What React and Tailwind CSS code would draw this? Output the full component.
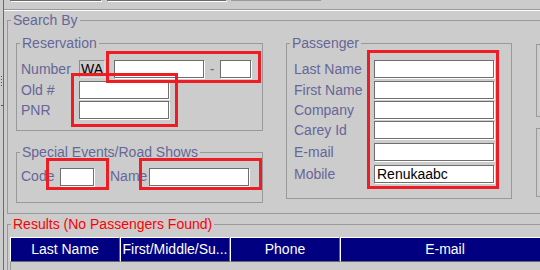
import React from 'react';

const label = 'text-[#666699]';
const field =
  'h-[18px] bg-white border border-[#6e6e6e] shadow-[1px_1px_0_#ffffff] px-[2px] text-[14px] text-black outline-none';

// titled border; padding goes on the inner div so the legend stays next to the corner
function Box({ title, className = '', inner = '', legendClass = label, children }) {
  return (
    <fieldset className={`border border-[#999999] ${className}`}>
      <legend className={`ml-[3px] px-[2px] leading-[16px] ${legendClass}`}>{title}</legend>
      <div className={inner}>{children}</div>
    </fieldset>
  );
}

function Row({ name, width, children, className = '' }) {
  return (
    <div className={`flex items-center ${className}`}>
      <span className={`${label} ${width} leading-[16px]`}>{name}</span>
      {children}
    </div>
  );
}

function Redbox({ className }) {
  return <div className={`absolute border-[3px] border-[#ee1c24] pointer-events-none ${className}`} />;
}

const passengerRows = [
  { name: 'Last Name', mt: '' },
  { name: 'First Name', mt: 'mt-[3px]' },
  { name: 'Company', mt: 'mt-[2px]' },
  { name: 'Carey Id', mt: 'mt-[2px]' },
  { name: 'E-mail', mt: 'mt-[4px]' },
  { name: 'Mobile', mt: 'mt-[4px]', value: 'Renukaabc' },
];

const columns = [
  { name: 'Last Name', w: 'w-[110px]' },
  { name: 'First/Middle/Su...', w: 'w-[110px]' },
  { name: 'Phone', w: 'w-[110px]' },
  { name: 'E-mail', w: 'w-[210px]' },
];

export default function App() {
  return (
    <div className="relative flex w-[540px] h-[270px] overflow-hidden bg-[#cccccc] font-['Liberation_Sans',Arial,sans-serif] text-[14px]">
      {/* splitter grip */}
      <div className="w-[3px] shrink-0 flex flex-col items-center pt-[76px] gap-[2px]">
        <div className="w-[1px] h-[1px] bg-[#555]" />
        <div className="w-[1px] h-[1px] bg-[#555]" />
        <div className="w-[1px] h-[1px] bg-[#555]" />
        <div className="w-[1px] h-[1px] bg-[#555]" />
        <div className="w-[2px] h-[1px] bg-[#555] mt-[17px]" />
      </div>
      <div className="w-px shrink-0 bg-[#6a6a6a]" />

      <div className="flex-1 flex flex-col min-w-0">
        {/* bottoms of the fields above */}
        <div className="h-[9px] flex items-start shrink-0">
          <div className="ml-[6px] w-[91px] h-[1px] bg-[#6a6a6a] shadow-[1px_1px_0_#ffffff]" />
          <div className="ml-[6px] w-[119px] h-[1px] bg-[#6a6a6a] shadow-[1px_1px_0_#ffffff]" />
          <div className="ml-[5px] w-[90px] h-[1px] bg-[#999999]" />
        </div>
        <div className="h-[2px] shrink-0 border-t border-[#999999] border-b border-b-white" />

        <Box title="Search By" className="mt-[1px] ml-[3px] w-[560px] shrink-0" inner="pt-[7px] pl-[8px] pb-[13px]">
          <div className="flex h-[165px]">
            {/* left column */}
            <div className="flex flex-col w-[247px]">
              <Box title="Reservation" inner="pt-[9px] pl-[4px] pb-[11px]">
                <Row name="Number" width="w-[58px]" className="h-[18px]">
                  <div className="w-[26px] h-[18px] border border-[#8c8c8c] border-r-[#dddddd] border-b-[#dddddd] text-black leading-[16px] pl-[1px]">
                    WA
                  </div>
                  <input readOnly className={`${field} ml-[9px] w-[90px]`} />
                  <span className="w-[16px] text-center text-[#666699]">-</span>
                  <input readOnly className={`${field} w-[31px]`} />
                </Row>
                <Row name="Old #" width="w-[58px]" className="mt-[3px]">
                  <input readOnly className={`${field} w-[90px]`} />
                </Row>
                <Row name="PNR" width="w-[58px]" className="mt-[2px]">
                  <input readOnly className={`${field} w-[90px]`} />
                </Row>
              </Box>

              <Box title="Special Events/Road Shows" className="mt-[13px]" inner="pt-[6px] pl-[4px] pb-[15px]">
                <div className="flex items-center">
                  <span className={`${label} w-[39px]`}>Code</span>
                  <input readOnly className={`${field} w-[34px]`} />
                  <span className={`${label} ml-[16px] w-[39px]`}>Name</span>
                  <input readOnly className={`${field} w-[100px]`} />
                </div>
              </Box>
            </div>

            {/* passenger */}
            <Box title="Passenger" className="ml-[23px] w-[226px] self-start" inner="pt-[9px] pl-[7px] pb-[15px]">
              {passengerRows.map((r) => (
                <Row key={r.name} name={r.name} width="w-[80px]" className={r.mt}>
                  <input readOnly value={r.value || ''} className={`${field} w-[120px]`} />
                </Row>
              ))}
            </Box>

            {/* cut-off panels on the right */}
            <div className="ml-[24px] flex flex-col">
              <div className="mt-[9px] w-[40px] h-[73px] border border-[#999999]" />
              <div className="mt-[11px] w-[40px] h-[69px] border border-[#999999]" />
            </div>
          </div>
        </Box>

        <Box
          title="Results (No Passengers Found)"
          legendClass="text-[#ff0000]"
          className="mt-[2px] ml-[3px] w-[560px] shrink-0"
          inner="pt-[5px] pl-[2px]"
        >
          <div className="flex">
            {columns.map((c) => (
              <div
                key={c.name}
                className={`${c.w} h-[25px] shrink-0 bg-[#000080] border border-t-white border-l-white border-r-[#666666] border-b-[#666666] text-white text-center leading-[23px] whitespace-nowrap overflow-hidden`}
              >
                {c.name}
              </div>
            ))}
          </div>
          <div className="h-[20px] border-l border-[#999999]" />
        </Box>
      </div>

      {/* annotation boxes */}
      <Redbox className="left-[106px] top-[51px] w-[155px] h-[32px]" />
      <Redbox className="left-[71px] top-[73px] w-[107px] h-[54px]" />
      <Redbox className="left-[367px] top-[50px] w-[132px] h-[139px]" />
      <Redbox className="left-[46px] top-[158px] w-[63px] h-[32px]" />
      <Redbox className="left-[139px] top-[158px] w-[123px] h-[32px]" />
    </div>
  );
}
